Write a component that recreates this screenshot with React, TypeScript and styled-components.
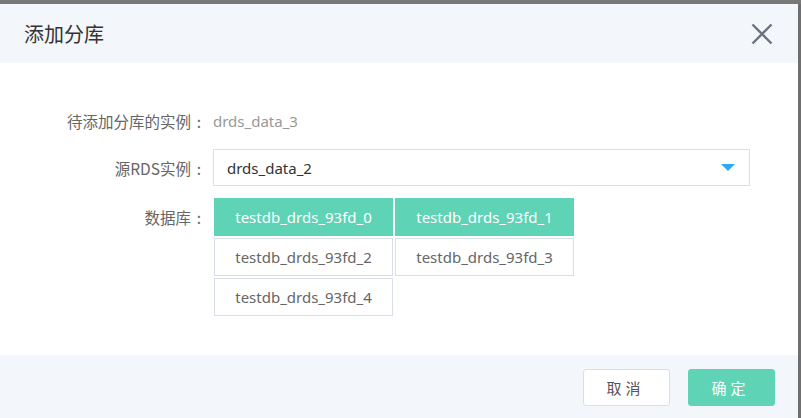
import * as React from 'react';
import styled, { createGlobalStyle } from 'styled-components';

const GREEN = '#5ed3b5';
const LINE = '#d9dfe7';

const GlobalStyle = createGlobalStyle`
    html, body {
        margin: 0;
        padding: 0;
        background: #ffffff;
        font-family: "Noto Sans", "Noto Sans CJK SC", sans-serif;
    }
`;

const Screen = styled.div`
    width: 801px;
    height: 418px;
    display: flex;
    flex-direction: column;
    overflow: hidden;
`;

const TopBar = styled.div`
    height: 4px;
    background: #787878;
`;

const Stage = styled.div`
    flex: 1;
    display: flex;
`;

const Modal = styled.div`
    flex: 1;
    display: flex;
    flex-direction: column;
`;

const EdgeStrip = styled.div`
    width: 3px;
    background: #6f6f6f;
`;

const Header = styled.div`
    height: 59px;
    background: #f3f6fa;
    display: flex;
    align-items: center;
    justify-content: space-between;
    padding: 0 24px 0 24px;
`;

const Title = styled.h2`
    margin: 0;
    font-size: 20px;
    font-weight: 400;
    color: #333333;
    font-family: "Noto Sans CJK SC", sans-serif;
`;

const CloseButton = styled.button`
    border: 0;
    background: transparent;
    padding: 0;
    width: 24px;
    height: 24px;
    display: flex;
    align-items: center;
    justify-content: center;
    cursor: pointer;
`;

const Body = styled.div`
    flex: 1;
    display: flex;
    flex-direction: column;
    gap: 10px;
    padding: 39px 0 0;
`;

const Row = styled.div<{ $top?: boolean }>`
    display: flex;
    align-items: ${p => (p.$top ? 'flex-start' : 'center')};
    min-height: ${p => (p.$top ? 'auto' : '37px')};
    margin-top: ${p => (p.$top ? '2px' : '0')};
`;

const Label = styled.div<{ $pad?: number }>`
    width: 213px;
    padding-right: 6px;
    box-sizing: border-box;
    text-align: right;
    font-size: 15.5px;
    color: #666666;
    font-family: "Noto Sans CJK SC", sans-serif;
    padding-top: ${p => p.$pad || 0}px;
`;

const Colon = styled.span`
    display: inline-block;
    width: 16px;
    text-align: center;
`;

const Value = styled.div`
    font-size: 15px;
    color: #999999;
`;

const Select = styled.div`
    width: 537px;
    height: 37px;
    box-sizing: border-box;
    border: 1px solid ${LINE};
    display: flex;
    align-items: center;
    justify-content: space-between;
    padding: 0 14px 0 13px;
    font-size: 15px;
    color: #333333;
`;

const Caret = styled.span`
    width: 0;
    height: 0;
    border-left: 7px solid transparent;
    border-right: 7px solid transparent;
    border-top: 7px solid #2ea6f7;
`;

const DbGrid = styled.div`
    display: grid;
    grid-template-columns: 179px 179px;
    gap: 2px 2px;
    margin-left: 1px;
`;

const DbItem = styled.div<{ $active?: boolean }>`
    height: 38px;
    box-sizing: border-box;
    border: 1px solid ${p => (p.$active ? GREEN : LINE)};
    background: ${p => (p.$active ? GREEN : '#ffffff')};
    color: ${p => (p.$active ? '#ffffff' : '#666666')};
    font-size: 15px;
    display: flex;
    align-items: center;
    justify-content: center;
`;

const Footer = styled.div`
    height: 63px;
    box-sizing: border-box;
    background: #f3f6fa;
    display: flex;
    justify-content: flex-end;
    align-items: flex-start;
    gap: 18px;
    padding: 14px 23px 0 0;
`;

const Button = styled.button<{ $primary?: boolean }>`
    width: 87px;
    height: 37px;
    border-radius: 3px;
    border: 1px solid ${p => (p.$primary ? GREEN : LINE)};
    background: ${p => (p.$primary ? GREEN : '#ffffff')};
    color: ${p => (p.$primary ? '#ffffff' : '#555555')};
    font-size: 15px;
    letter-spacing: 4px;
    padding-left: 4px;
    font-family: "Noto Sans CJK SC", sans-serif;
    cursor: pointer;
`;

const databases = [
    { name: 'testdb_drds_93fd_0', active: true },
    { name: 'testdb_drds_93fd_1', active: true },
    { name: 'testdb_drds_93fd_2', active: false },
    { name: 'testdb_drds_93fd_3', active: false },
    { name: 'testdb_drds_93fd_4', active: false },
];

export default function App() {
    return (
        <Screen>
            <GlobalStyle />
            <TopBar />
            <Stage>
                <Modal>
                    <Header>
                        <Title>添加分库</Title>
                        <CloseButton aria-label="close">
                            <svg width="22" height="22" viewBox="0 0 22 22">
                                <path d="M1.5 1.5 L20.5 20.5 M20.5 1.5 L1.5 20.5" stroke="#6b7280" strokeWidth="2.4" fill="none" />
                            </svg>
                        </CloseButton>
                    </Header>
                    <Body>
                        <Row>
                            <Label>待添加分库的实例<Colon>:</Colon></Label>
                            <Value>drds_data_3</Value>
                        </Row>
                        <Row>
                            <Label>源RDS实例<Colon>:</Colon></Label>
                            <Select>
                                <span>drds_data_2</span>
                                <Caret />
                            </Select>
                        </Row>
                        <Row $top>
                            <Label $pad={8}>数据库<Colon>:</Colon></Label>
                            <DbGrid>
                                {databases.map(db => (
                                    <DbItem key={db.name} $active={db.active}>{db.name}</DbItem>
                                ))}
                            </DbGrid>
                        </Row>
                    </Body>
                    <Footer>
                        <Button>取消</Button>
                        <Button $primary>确定</Button>
                    </Footer>
                </Modal>
                <EdgeStrip />
            </Stage>
        </Screen>
    );
}
